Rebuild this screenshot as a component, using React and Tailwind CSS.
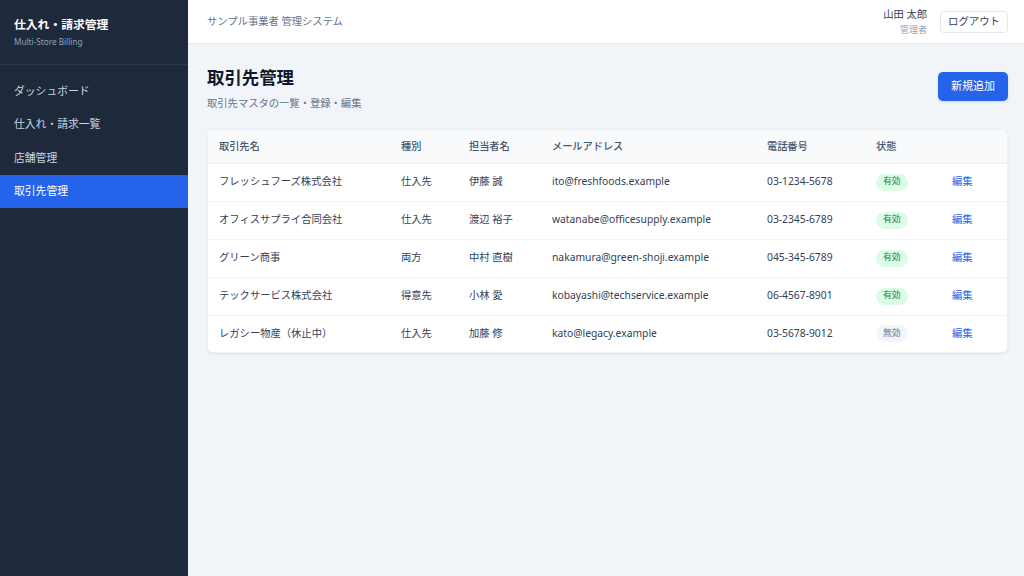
import React from "react";

const navItems = [
  { label: "ダッシュボード", active: false },
  { label: "仕入れ・請求一覧", active: false },
  { label: "店舗管理", active: false },
  { label: "取引先管理", active: true },
];

const partners = [
  {
    name: "フレッシュフーズ株式会社",
    type: "仕入先",
    person: "伊藤 誠",
    email: "ito@freshfoods.example",
    tel: "03-1234-5678",
    active: true,
  },
  {
    name: "オフィスサプライ合同会社",
    type: "仕入先",
    person: "渡辺 裕子",
    email: "watanabe@officesupply.example",
    tel: "03-2345-6789",
    active: true,
  },
  {
    name: "グリーン商事",
    type: "両方",
    person: "中村 直樹",
    email: "nakamura@green-shoji.example",
    tel: "045-345-6789",
    active: true,
  },
  {
    name: "テックサービス株式会社",
    type: "得意先",
    person: "小林 愛",
    email: "kobayashi@techservice.example",
    tel: "06-4567-8901",
    active: true,
  },
  {
    name: "レガシー物産（休止中）",
    type: "仕入先",
    person: "加藤 修",
    email: "kato@legacy.example",
    tel: "03-5678-9012",
    active: false,
  },
];

const Sidebar = () => (
  <aside className="w-[188px] shrink-0 bg-[#1e293b] text-white flex flex-col">
    <div className="px-[14px] pt-[16px] pb-[16px] border-b border-[#2b3648]">
      <div className="text-[11.8px] font-bold leading-[16px]">仕入れ・請求管理</div>
      <div className="text-[8.2px] text-[#94a3b8] mt-[4px] leading-[12px]">
        Multi-Store Billing
      </div>
    </div>
    <nav className="mt-[9px] flex flex-col">
      {navItems.map((item) => (
        <div
          key={item.label}
          className={
            item.active
              ? "h-[33.5px] flex items-center px-[14px] text-[10.8px] bg-[#2563eb] text-white"
              : "h-[33.5px] flex items-center px-[14px] text-[10.8px] text-[#cbd5e1]"
          }
        >
          {item.label}
        </div>
      ))}
    </nav>
  </aside>
);

const Header = () => (
  <header className="h-[44px] bg-white border-b border-[#e2e8f0] flex items-center justify-between pl-[19px] pr-[16px]">
    <div className="text-[10.3px] text-[#64748b]">サンプル事業者 管理システム</div>
    <div className="flex items-center gap-[13px]">
      <div className="text-right leading-none">
        <div className="text-[10.3px] text-[#334155] leading-[14px]">山田 太郎</div>
        <div className="text-[9px] text-[#94a3b8] leading-[12px] mt-[3px]">管理者</div>
      </div>
      <button className="h-[22px] px-[7px] border border-[#e2e8f0] rounded-[4px] text-[10.4px] text-[#334155] bg-white">
        ログアウト
      </button>
    </div>
  </header>
);

const Badge = ({ active }) =>
  active ? (
    <span className="inline-flex items-center h-[17px] px-[7px] rounded-full bg-[#dcfce7] text-[#15803d] text-[8.8px]">
      有効
    </span>
  ) : (
    <span className="inline-flex items-center h-[17px] px-[7px] rounded-full bg-[#f1f5f9] text-[#64748b] text-[8.8px]">
      無効
    </span>
  );

const PartnerTable = () => (
  <div className="mt-[19px] bg-white rounded-[6px] shadow-[0_1px_2px_rgba(15,23,42,0.08)] border border-[#eef1f5] overflow-hidden">
    <table className="w-full table-fixed border-collapse">
      <colgroup>
        <col className="w-[193px]" />
        <col className="w-[68px]" />
        <col className="w-[83px]" />
        <col className="w-[215px]" />
        <col className="w-[109px]" />
        <col className="w-[76px]" />
        <col />
      </colgroup>
      <thead>
        <tr className="h-[33px] bg-[#f8fafc] border-b border-[#eef1f5]">
          {["取引先名", "種別", "担当者名", "メールアドレス", "電話番号", "状態", ""].map(
            (h, i) => (
              <th
                key={i}
                className={
                  i === 0
                    ? "pl-[11px] text-left text-[10.2px] font-medium text-[#475569]"
                    : "text-left text-[10.2px] font-medium text-[#475569]"
                }
              >
                {h}
              </th>
            )
          )}
        </tr>
      </thead>
      <tbody>
        {partners.map((p, i) => (
          <tr
            key={p.name}
            className={
              i === partners.length - 1
                ? "h-[37px] text-[10.3px] text-[#334155]"
                : "h-[38px] text-[10.3px] text-[#334155] border-b border-[#f1f5f9]"
            }
          >
            <td className="pl-[11px] whitespace-nowrap">{p.name}</td>
            <td className="whitespace-nowrap">{p.type}</td>
            <td className="whitespace-nowrap">{p.person}</td>
            <td className="whitespace-nowrap">{p.email}</td>
            <td className="whitespace-nowrap">{p.tel}</td>
            <td>
              <Badge active={p.active} />
            </td>
            <td className="text-[#2563eb]">編集</td>
          </tr>
        ))}
      </tbody>
    </table>
  </div>
);

export default function App() {
  return (
    <div
      className="w-[1024px] h-[576px] flex overflow-hidden"
      style={{ fontFamily: '"Noto Sans", "Noto Sans CJK JP", sans-serif' }}
    >
      <Sidebar />
      <div className="flex-1 flex flex-col bg-[#f1f5f9]">
        <Header />
        <main className="pr-[16px] pl-[19px] pt-[20px]">
          <div className="flex items-start justify-between">
            <div>
              <h1 className="text-[17.4px] font-bold text-[#0f172a] leading-[24px] mt-[1px]">
                取引先管理
              </h1>
              <p className="text-[10.3px] text-[#64748b] mt-[7px] leading-[14px]">
                取引先マスタの一覧・登録・編集
              </p>
            </div>
            <button className="mt-[8px] h-[29px] px-[13px] bg-[#2563eb] text-white text-[11px] rounded-[5px] shadow-sm">
              新規追加
            </button>
          </div>
          <PartnerTable />
        </main>
      </div>
    </div>
  );
}
